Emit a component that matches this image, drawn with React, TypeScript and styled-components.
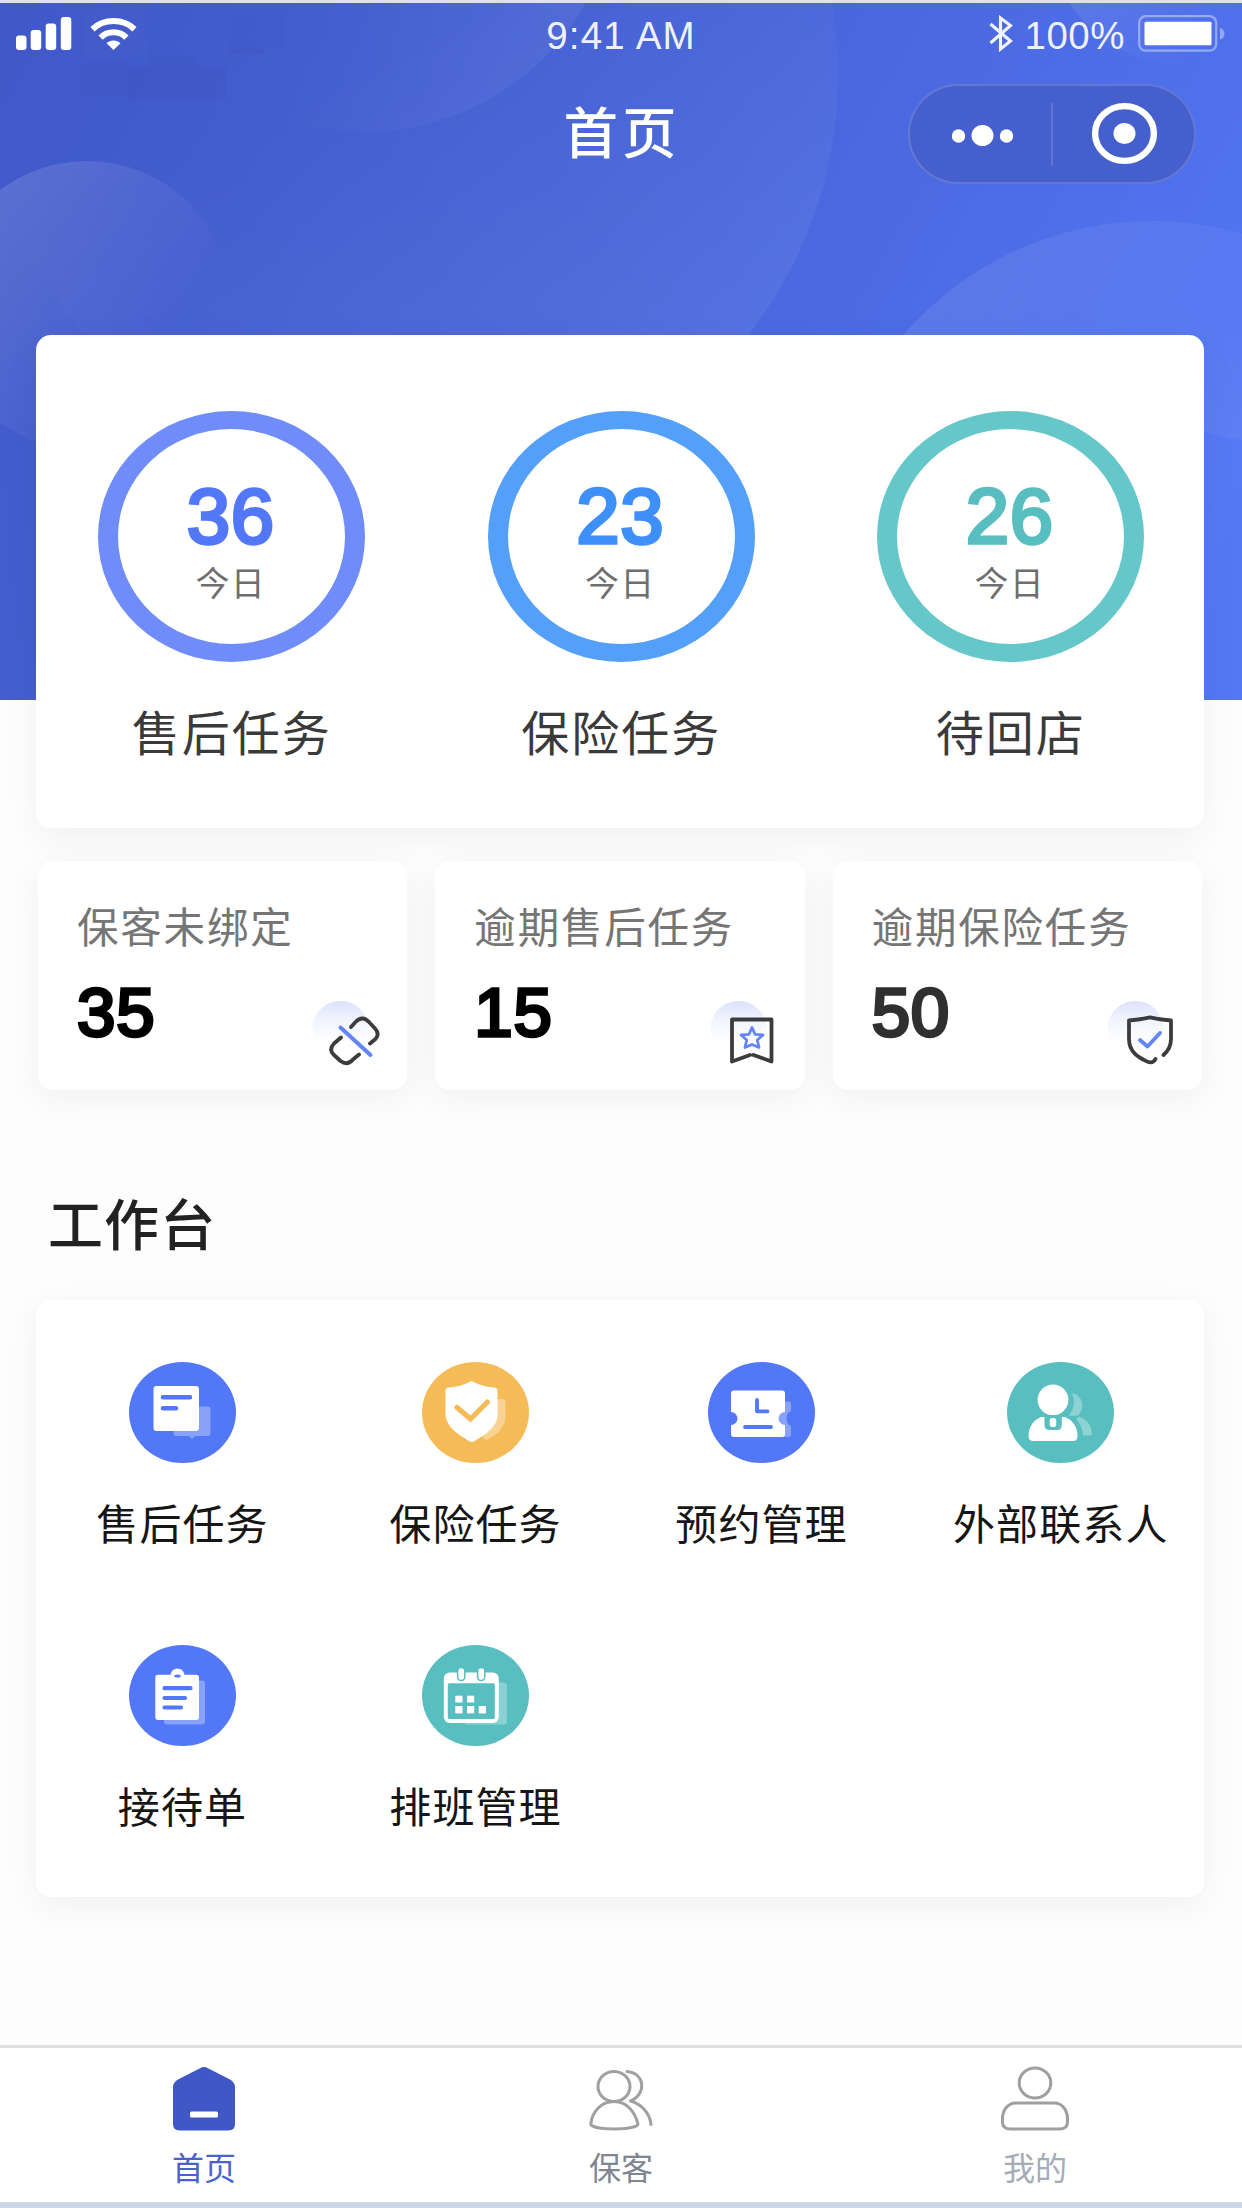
import React from "react";
import styled, { createGlobalStyle } from "styled-components";

const GlobalStyle = createGlobalStyle`
  *, *::before, *::after { box-sizing: border-box; }
  body {
    margin: 0;
    background: #fdfdfd;
    font-family: "Liberation Sans", "Noto Sans CJK SC", sans-serif;
  }
`;

const BLUE = "#5277f7";
const TEAL = "#58bec0";
const ORANGE = "#f5bb57";

/* ---------- page frame ---------- */

const Screen = styled.div`
  position: relative;
  display: flex;
  flex-direction: column;
  width: 1242px;
  height: 2208px;
  overflow: hidden;
  background: #fdfdfd;
  border-top: 3px solid #dfe1e2;
`;

const Backdrop = styled.svg`
  position: absolute;
  top: 0;
  left: 0;
  display: block;
`;

const Header = styled.header`
  position: relative;
  height: 332px;
  color: #fff;
`;

const StatusBar = styled.div`
  display: grid;
  grid-template-columns: 1fr auto 1fr;
  align-items: center;
  height: 61px;
  padding: 0 16px;
`;

const StatusGroup = styled.div<{ $end?: boolean }>`
  display: flex;
  align-items: center;
  justify-content: ${(p) => (p.$end ? "flex-end" : "flex-start")};
`;

const StatusText = styled.span<{ $spacing: number }>`
  padding-top: 5px;
  font-size: 38.5px;
  line-height: 44px;
  letter-spacing: ${(p) => p.$spacing}px;
  color: rgba(255, 255, 255, 0.93);
`;

const SignalIcon = styled.svg`
  margin-right: 18px;
`;

const BluetoothIcon = styled.svg`
  margin-right: 12px;
`;

const BatteryIcon = styled.svg`
  margin-left: 13px;
`;

const NavBar = styled.div`
  display: grid;
  grid-template-columns: 1fr auto 1fr;
  align-items: center;
  height: 140px;
  padding: 0 46px;
`;

const NavTitle = styled.h1`
  grid-column: 2;
  margin: 0;
  padding: 2px 0 0 2px;
  font-size: 54.5px;
  font-weight: 500;
  line-height: 64px;
  letter-spacing: 4px;
`;

const Capsule = styled.div`
  justify-self: end;
  display: flex;
  align-items: center;
  width: 288px;
  height: 100px;
  border: 2px solid rgba(255, 255, 255, 0.16);
  border-radius: 50px;
  background: #455fcd;
`;

const CapsuleButton = styled.button`
  flex: 1;
  display: flex;
  align-items: center;
  justify-content: center;
  padding: 0 0 0 3px;
  border: 0;
  background: none;
`;

const CapsuleDivider = styled.span`
  width: 2px;
  height: 63px;
  background: rgba(255, 255, 255, 0.14);
`;

/* ---------- cards ---------- */

const Card = styled.section`
  border-radius: 15px;
  background: #fff;
  box-shadow: 0 8px 36px rgba(0, 0, 0, 0.055);
`;

const SummaryCard = styled(Card)`
  position: relative;
  display: grid;
  grid-template-columns: repeat(3, 389.5px);
  width: 1168px;
  height: 493px;
  margin-left: 36px;
  padding: 76px 0 0 1px;
`;

const SummaryItem = styled.div`
  display: flex;
  flex-direction: column;
  align-items: center;
`;

const Ring = styled.div<{ $color: string }>`
  display: flex;
  flex-direction: column;
  align-items: center;
  width: 267px;
  height: 251px;
  border: solid ${(p) => p.$color};
  border-width: 18.5px 20px;
  border-radius: 50%;
`;

const RingValue = styled.strong<{ $color: string }>`
  margin: 47px 2px 0 0;
  font-size: 78px;
  font-weight: 400;
  line-height: 80px;
  letter-spacing: 0.5px;
  -webkit-text-stroke: 3.4px currentColor;
  color: ${(p) => p.$color};
`;

const RingCaption = styled.span`
  margin: 10px 2px 0 0;
  font-size: 34px;
  line-height: 36px;
  letter-spacing: 1.2px;
  color: #6e6e6e;
`;

const SummaryLabel = styled.span`
  margin-top: 45px;
  font-size: 48px;
  line-height: 56px;
  letter-spacing: 2px;
  color: #3a3a3a;
`;

const AlertRow = styled.div`
  position: relative;
  display: grid;
  grid-template-columns: repeat(3, 1fr);
  gap: 28px;
  margin-top: 33px;
  padding: 0 40px 0 38px;
`;

const AlertCard = styled(Card)`
  height: 229px;
  padding: 44px 20px 0 39px;
`;

const AlertLabel = styled.div`
  font-size: 41.5px;
  line-height: 48px;
  letter-spacing: 1.8px;
  white-space: nowrap;
  color: #757575;
`;

const AlertBody = styled.div`
  display: flex;
  align-items: flex-end;
  justify-content: space-between;
  height: 113px;
  padding-top: 25px;
`;

const AlertValue = styled.strong<{ $color: string }>`
  align-self: flex-start;
  font-size: 69px;
  font-weight: 400;
  line-height: 70px;
  letter-spacing: 0.8px;
  -webkit-text-stroke: 3.4px currentColor;
  color: ${(p) => p.$color};
`;

const SectionTitle = styled.h2`
  position: relative;
  margin: 104px 0 42px 48px;
  font-size: 55px;
  font-weight: 500;
  line-height: 64px;
  letter-spacing: 1.1px;
  color: #222;
`;

const Workbench = styled(Card)`
  display: grid;
  grid-template-columns: 293px 286px 278px 214px;
  grid-auto-rows: 189px;
  row-gap: 94px;
  width: 1168px;
  height: 597px;
  margin-left: 36px;
  padding: 62px 0 0 60px;
`;

const WorkItem = styled.div`
  display: flex;
  flex-direction: column;
  align-items: center;
  justify-self: start;
  min-width: 173px;
`;

const WorkLabel = styled.span`
  margin-top: 38px;
  font-size: 42px;
  line-height: 50px;
  letter-spacing: 1.1px;
  white-space: nowrap;
  color: #161616;
`;

/* ---------- tab bar ---------- */

const TabBar = styled.nav`
  display: grid;
  grid-template-columns: 408px 426px 402px;
  height: 163px;
  margin-top: auto;
  border-top: 3px solid #dfe1e1;
  border-bottom: 6px solid #cdd7e5;
  background: #fff;
`;

const Tab = styled.a<{ $color: string }>`
  display: flex;
  flex-direction: column;
  align-items: center;
  gap: 16px;
  padding-top: 18px;
  font-size: 32px;
  line-height: 42px;
  color: ${(p) => p.$color};
`;

/* ---------- drawings ---------- */

const HeaderArt = () => (
  <Backdrop width="1242" height="697" viewBox="0 3 1242 697">
    <defs>
      <linearGradient id="sky" x1="0" y1="0" x2="1130" y2="640" gradientUnits="userSpaceOnUse">
        <stop offset="0" stopColor="#4058c8" />
        <stop offset="0.5" stopColor="#4864d8" />
        <stop offset="1" stopColor="#5276f5" />
      </linearGradient>
      <linearGradient id="glowA" x1="0" y1="0.1" x2="0.75" y2="0.65">
        <stop offset="0" stopColor="#fff" stopOpacity="0.16" />
        <stop offset="1" stopColor="#fff" stopOpacity="0" />
      </linearGradient>
      <linearGradient id="glowB" x1="0.95" y1="0.85" x2="0.35" y2="0.75">
        <stop offset="0" stopColor="#fff" stopOpacity="0.06" />
        <stop offset="1" stopColor="#fff" stopOpacity="0" />
      </linearGradient>
      <linearGradient id="glowC" x1="0.85" y1="0.9" x2="0.6" y2="0.4">
        <stop offset="0" stopColor="#fff" stopOpacity="0.07" />
        <stop offset="1" stopColor="#fff" stopOpacity="0" />
      </linearGradient>
      <linearGradient id="glowD" x1="0.15" y1="0.1" x2="0.7" y2="0.4">
        <stop offset="0" stopColor="#fff" stopOpacity="0.085" />
        <stop offset="1" stopColor="#fff" stopOpacity="0.01" />
      </linearGradient>
      <linearGradient id="glowE" x1="0" y1="1" x2="0" y2="0.6">
        <stop offset="0" stopColor="#fff" stopOpacity="0.045" />
        <stop offset="1" stopColor="#fff" stopOpacity="0" />
      </linearGradient>
      <linearGradient id="glowF" x1="0" y1="0.5" x2="0.55" y2="1">
        <stop offset="0" stopColor="#fff" stopOpacity="0.12" />
        <stop offset="1" stopColor="#fff" stopOpacity="0" />
      </linearGradient>
    </defs>
    <rect y="3" width="1242" height="697" fill="url(#sky)" />
    <g fill="#3a50b8" opacity="0.2">
      <rect x="82" y="62" width="45" height="34" opacity="0.5" />
      <rect x="127" y="67" width="99" height="33" />
      <rect x="149" y="55" width="49" height="12" opacity="0.6" />
      <rect x="229" y="11" width="55" height="37" opacity="0.3" />
      <rect x="229" y="47" width="35" height="7" />
    </g>
    <rect x="84" y="10" width="62" height="47" fill="#fff" opacity="0.015" />
    <circle cx="87" cy="306" r="145" fill="url(#glowA)" />
    <circle cx="364" cy="-123" r="255" fill="url(#glowB)" />
    <circle cx="416" cy="75" r="422" fill="url(#glowC)" />
    <circle cx="1152" cy="549" r="328" fill="url(#glowD)" />
    <circle cx="1262" cy="261" r="180" fill="url(#glowE)" />
    <circle cx="1178" cy="-66" r="129" fill="url(#glowF)" />
  </Backdrop>
);

const Signal = () => (
  <SignalIcon width="56" height="33" viewBox="0 0 56 33" fill="#fff">
    <rect x="0" y="18.5" width="10.5" height="14.5" rx="3" />
    <rect x="14.7" y="13" width="10.5" height="20" rx="3" />
    <rect x="29.7" y="6.5" width="10.5" height="26.5" rx="3" />
    <rect x="44.8" y="0" width="10.5" height="33" rx="3" />
  </SignalIcon>
);

const Wifi = () => (
  <svg width="47" height="32" viewBox="0 0 47 32">
    <g fill="none" stroke="#fff" strokeWidth="6">
      <path d="M2.5 11.2C14 0.4 33 0.4 44.5 11.2" />
      <path d="M10.6 19.6C17.5 12.6 29.5 12.6 36.4 19.6" />
    </g>
    <path d="M16.5 25.2c4-3.6 10-3.600 14 0L23.5 32z" fill="#fff" />
  </svg>
);

const Bluetooth = () => (
  <BluetoothIcon width="24" height="37" viewBox="0 0 24 37" fill="none" stroke="#fff" strokeWidth="3.1">
    <path d="M1.5 9L21.5 26L11.5 34V3L21.5 10.5L1.5 28" opacity="0.93" />
  </BluetoothIcon>
);

const Battery = () => (
  <BatteryIcon width="88" height="37" viewBox="0 0 88 37">
    <rect x="1.2" y="1.2" width="77" height="34.5" rx="6.5" fill="none" stroke="#fff" strokeOpacity="0.4" strokeWidth="2.2" />
    <rect x="6.5" y="6.8" width="67" height="23.5" rx="1.5" fill="#fff" />
    <path d="M82 13c6 1.5 6 10 0 11.5z" fill="#fff" opacity="0.4" />
  </BatteryIcon>
);

const MoreDots = () => (
  <svg width="66" height="26" viewBox="0 0 66 26" fill="#fff">
    <circle cx="9.5" cy="15" r="6.7" />
    <ellipse cx="33.5" cy="14.5" rx="11" ry="10.6" />
    <circle cx="57.500" cy="15" r="6.7" />
  </svg>
);

const Target = () => (
  <svg width="68" height="64" viewBox="0 0 68 64">
    <ellipse cx="33.5" cy="31.5" rx="29.4" ry="27.4" fill="none" stroke="#fff" strokeWidth="6.400" />
    <ellipse cx="33.5" cy="31.5" rx="11" ry="10.5" fill="#fff" />
  </svg>
);

const AlertIcon = ({ id, children }: { id: string; children: React.ReactNode }) => (
  <svg width="76" height="66" viewBox="0 0 76 66" fill="none" strokeLinecap="round" strokeLinejoin="round">
    <defs>
      <linearGradient id={id} x1="0" y1="0" x2="0" y2="1">
        <stop offset="0" stopColor="#dbe1fd" />
        <stop offset="0.95" stopColor="#fff" stopOpacity="0" />
      </linearGradient>
    </defs>
    <ellipse cx="29.5" cy="28" rx="28" ry="27" fill={`url(#${id})`} />
    {children}
  </svg>
);

const UnlinkArt = () => (
  <AlertIcon id="tintUnlink">
    <g stroke="#3c3c3c" strokeWidth="3.8">
      <path d="M40 27L44.500 22Q51 15.500 57.5 21.5L64 28.5Q69 34 64.500 39L59 43.5" />
      <path d="M30 37.5L23 43.5Q17.500 49.5 22.5 54.5L29.5 61Q36.500 66 42 59.5L48 54.5" />
    </g>
    <path d="M29.5 27.5L59.5 55" stroke="#6484fa" strokeWidth="4" />
  </AlertIcon>
);

const BookmarkArt = () => (
  <AlertIcon id="tintBookmark">
    <g transform="translate(2 0)">
      <path d="M39 55L21 61.5V19.5H60.500V61.5L42.500 55" stroke="#3c3c3c" strokeWidth="3.8" />
      <path d="M41 27.5L44 34.3L52 35L46.3 40L48 47.5L41 44.5L34 47.5L35.7 40L30 35L38 34.3Z" stroke="#6484fa" strokeWidth="2.8" />
    </g>
  </AlertIcon>
);

const ShieldArt = () => (
  <AlertIcon id="tintShield">
    <path
      d="M57.5 55Q65 48.5 65 39V20.5Q54 19.5 44 17.3Q34 19.5 23 20.5V39C23 53 34 58 41 61.5Q47 64 49.5 59"
      stroke="#3c3c3c"
      strokeWidth="3.8"
    />
    <path d="M34 40L41.5 46.5L54 33" stroke="#6484fa" strokeWidth="3.8" />
  </AlertIcon>
);

const Disc = ({ color, children }: { color: string; children: React.ReactNode }) => (
  <svg width="107" height="101" viewBox="0 0 107 101">
    <ellipse cx="53.5" cy="50.5" rx="53.5" ry="50.5" fill={color} />
    {children}
  </svg>
);

const DocArt = () => (
  <Disc color={BLUE}>
    <path d="M47 44.5H79Q81.5 44.5 81.5 47V71.5Q81.5 74 79 74H66L63 77L60 74H47Q44.5 74 44.5 71.5V47Z" fill="#fff" opacity="0.32" />
    <rect x="24.5" y="24" width="45.5" height="45" rx="3" fill="#fff" />
    <path d="M34 35.3H61M34 46.3H47" stroke={BLUE} strokeWidth="4.6" strokeLinecap="round" />
  </Disc>
);

const GuardArt = () => (
  <Disc color={ORANGE}>
    <path d="M72 37H81Q83.5 37 83.5 40V56Q82 70 64 78L56 70Z" fill="#fff" opacity="0.36" />
    <path d="M49.5 19Q61 25 73 25.5Q75.5 26 75.5 29V52C75.5 66 62 73 52 79.5Q49.5 80.5 47 79C36 72 23.5 65 23.5 51V29Q23.5 26 26 25.5Q38 25 49.5 19Z" fill="#fff" />
    <path d="M35 45.5L48.5 57L65.5 40" stroke={ORANGE} strokeWidth="5.2" fill="none" strokeLinecap="round" />
  </Disc>
);

const TicketArt = () => (
  <Disc color={BLUE}>
    <path d="M66 39.5H80Q83 39.5 83 42V49Q78.5 50.5 78.5 56.5Q78.5 62.5 83 64V72.5Q83 75 80 75H66Z" fill="#fff" opacity="0.32" />
    <path
      d="M26 28.5H74Q77 28.5 77 31.5V50A6.5 6.5 0 0 0 77 63V72Q77 75 74 75H26Q23 75 23 72V63A6.5 6.5 0 0 0 23 50V31.5Q23 28.5 26 28.5Z"
      fill="#fff"
    />
    <path d="M49 38V49.3H59.5M37 65H63" stroke={BLUE} strokeWidth="3.8" fill="none" strokeLinecap="round" strokeLinejoin="round" />
  </Disc>
);

const ContactArt = () => (
  <Disc color={TEAL}>
    <g fill="#fff" opacity="0.32">
      <path d="M65 31C75 33 79 45 71 53.5L62 54Q70 43 65 31Z" />
      <path d="M72 54.5Q84 59 85 71Q85 73.5 82 73.5H76Q75 63 69 57Z" />
    </g>
    <circle cx="46" cy="37.8" r="15.4" fill="#fff" />
    <path d="M34 55H58Q70 60 70.5 74Q70.5 79 66 79H26.5Q21.5 79 21.5 74Q22 60 34 55Z" fill="#fff" />
    <path d="M37.5 53H54.8V63Q54.8 68 50 68H42.5Q37.5 68 37.5 63Z" fill={TEAL} />
    <rect x="42.8" y="56" width="6.4" height="9" rx="2.5" fill="#fff" />
  </Disc>
);

const ClipboardArt = () => (
  <Disc color={BLUE}>
    <rect x="35" y="35.5" width="41" height="44" rx="3" fill="#fff" opacity="0.32" />
    <path d="M29 29.7H41.5Q43 23.5 48.5 23.5Q54 23.5 55.5 29.7H67Q70 29.7 70 32.5V72Q70 75 67 75H29Q26.3 75 26.3 72V32.5Q26.3 29.7 29 29.7Z" fill="#fff" />
    <ellipse cx="48.5" cy="31" rx="3.3" ry="1.6" fill={BLUE} />
    <path d="M35.5 43.2H61.5M35.5 53H56M35.5 62.5H52" stroke={BLUE} strokeWidth="4.2" strokeLinecap="round" />
  </Disc>
);

const CalendarArt = () => (
  <Disc color={TEAL}>
    <path d="M74 37.5H81Q85 37.5 85 41V76Q85 79.5 81 79.5H43V76H74Z" fill="#fff" opacity="0.3" />
    <rect x="21.8" y="27.5" width="55" height="50.5" rx="6" fill="#fff" />
    <rect x="25.8" y="38.3" width="47" height="35.7" rx="1.5" fill={TEAL} />
    <g fill="#fff" stroke={TEAL} strokeWidth="1.5">
      <rect x="35.6" y="22.6" width="7.2" height="12.8" rx="3.5" />
      <rect x="55.6" y="22.6" width="7.2" height="12.8" rx="3.5" />
    </g>
    <g fill="#fff">
      <rect x="33.3" y="50.7" width="7.2" height="6.8" />
      <rect x="45" y="50.7" width="7.2" height="6.8" />
      <rect x="33.3" y="61" width="7.2" height="7.4" />
      <rect x="45" y="61" width="7.2" height="7.4" />
      <rect x="56.7" y="61" width="7.2" height="7.4" />
    </g>
  </Disc>
);

const HomeArt = () => (
  <svg width="62" height="66" viewBox="0 0 62 66">
    <path d="M27 2.2Q31 -0.3 35 2.2L57 13.5Q62 16.5 62 21V58Q62 64.5 55.5 64.5H6.5Q0 64.5 0 58V21Q0 16.5 5 13.5Z" fill="#4058c6" />
    <rect x="17" y="45.5" width="28" height="6" rx="1.5" fill="#fff" />
  </svg>
);

const GuestsArt = () => (
  <svg width="64" height="66" viewBox="0 0 64 66" fill="none" stroke="#a0a0a0" strokeWidth="3" strokeLinecap="round" strokeLinejoin="round">
    <ellipse cx="25" cy="20.5" rx="16" ry="15" />
    <path d="M25 35.5C38 35.5 46 46 49 58C48 64.5 2.5 64.5 1.8 58C3 46 12 35.5 25 35.5Z" />
    <path d="M38 5.5C56 7 58 28 41.5 35C52 38 60.5 46 62 58.5" />
  </svg>
);

const ProfileArt = () => (
  <svg width="68" height="66" viewBox="0 0 68 66" fill="none" stroke="#9f9f9f" strokeWidth="3">
    <ellipse cx="34" cy="17" rx="15.8" ry="15" />
    <path d="M15 37H53C62 37 66.5 45 66.5 53V56Q66.5 63 58.5 63H9.5Q1.5 63 1.5 56V53C1.5 45 6 37 15 37Z" />
  </svg>
);

/* ---------- data ---------- */

const summary = [
  { value: 36, label: "售后任务", ring: "#6f8cf9", text: BLUE },
  { value: 23, label: "保险任务", ring: "#549ff8", text: "#3e90f8" },
  { value: 26, label: "待回店", ring: "#65c7ca", text: TEAL },
];

const alerts = [
  { label: "保客未绑定", value: 35, color: "#000", Art: UnlinkArt },
  { label: "逾期售后任务", value: 15, color: "#000", Art: BookmarkArt },
  { label: "逾期保险任务", value: 50, color: "#303030", Art: ShieldArt },
];

const workItems = [
  { label: "售后任务", Art: DocArt },
  { label: "保险任务", Art: GuardArt },
  { label: "预约管理", Art: TicketArt },
  { label: "外部联系人", Art: ContactArt },
  { label: "接待单", Art: ClipboardArt },
  { label: "排班管理", Art: CalendarArt },
];

const tabs = [
  { label: "首页", color: "#4a62cf", Art: HomeArt },
  { label: "保客", color: "#7f8692", Art: GuestsArt },
  { label: "我的", color: "#a4abb9", Art: ProfileArt },
];

export default function App() {
  return (
    <>
      <GlobalStyle />
      <Screen>
        <HeaderArt />
        <Header>
          <StatusBar>
            <StatusGroup>
              <Signal />
              <Wifi />
            </StatusGroup>
            <StatusText $spacing={1.2}>9:41 AM</StatusText>
            <StatusGroup $end>
              <Bluetooth />
              <StatusText $spacing={0.5}>100%</StatusText>
              <Battery />
            </StatusGroup>
          </StatusBar>
          <NavBar>
            <NavTitle>首页</NavTitle>
            <Capsule>
              <CapsuleButton aria-label="更多">
                <MoreDots />
              </CapsuleButton>
              <CapsuleDivider />
              <CapsuleButton aria-label="关闭">
                <Target />
              </CapsuleButton>
            </Capsule>
          </NavBar>
        </Header>

        <SummaryCard>
          {summary.map((s) => (
            <SummaryItem key={s.label}>
              <Ring $color={s.ring}>
                <RingValue $color={s.text}>{s.value}</RingValue>
                <RingCaption>今日</RingCaption>
              </Ring>
              <SummaryLabel>{s.label}</SummaryLabel>
            </SummaryItem>
          ))}
        </SummaryCard>

        <AlertRow>
          {alerts.map(({ label, value, color, Art }) => (
            <AlertCard key={label}>
              <AlertLabel>{label}</AlertLabel>
              <AlertBody>
                <AlertValue $color={color}>{value}</AlertValue>
                <Art />
              </AlertBody>
            </AlertCard>
          ))}
        </AlertRow>

        <SectionTitle>工作台</SectionTitle>

        <Workbench>
          {workItems.map(({ label, Art }) => (
            <WorkItem key={label}>
              <Art />
              <WorkLabel>{label}</WorkLabel>
            </WorkItem>
          ))}
        </Workbench>

        <TabBar>
          {tabs.map(({ label, color, Art }) => (
            <Tab key={label} $color={color}>
              <Art />
              {label}
            </Tab>
          ))}
        </TabBar>
      </Screen>
    </>
  );
}
